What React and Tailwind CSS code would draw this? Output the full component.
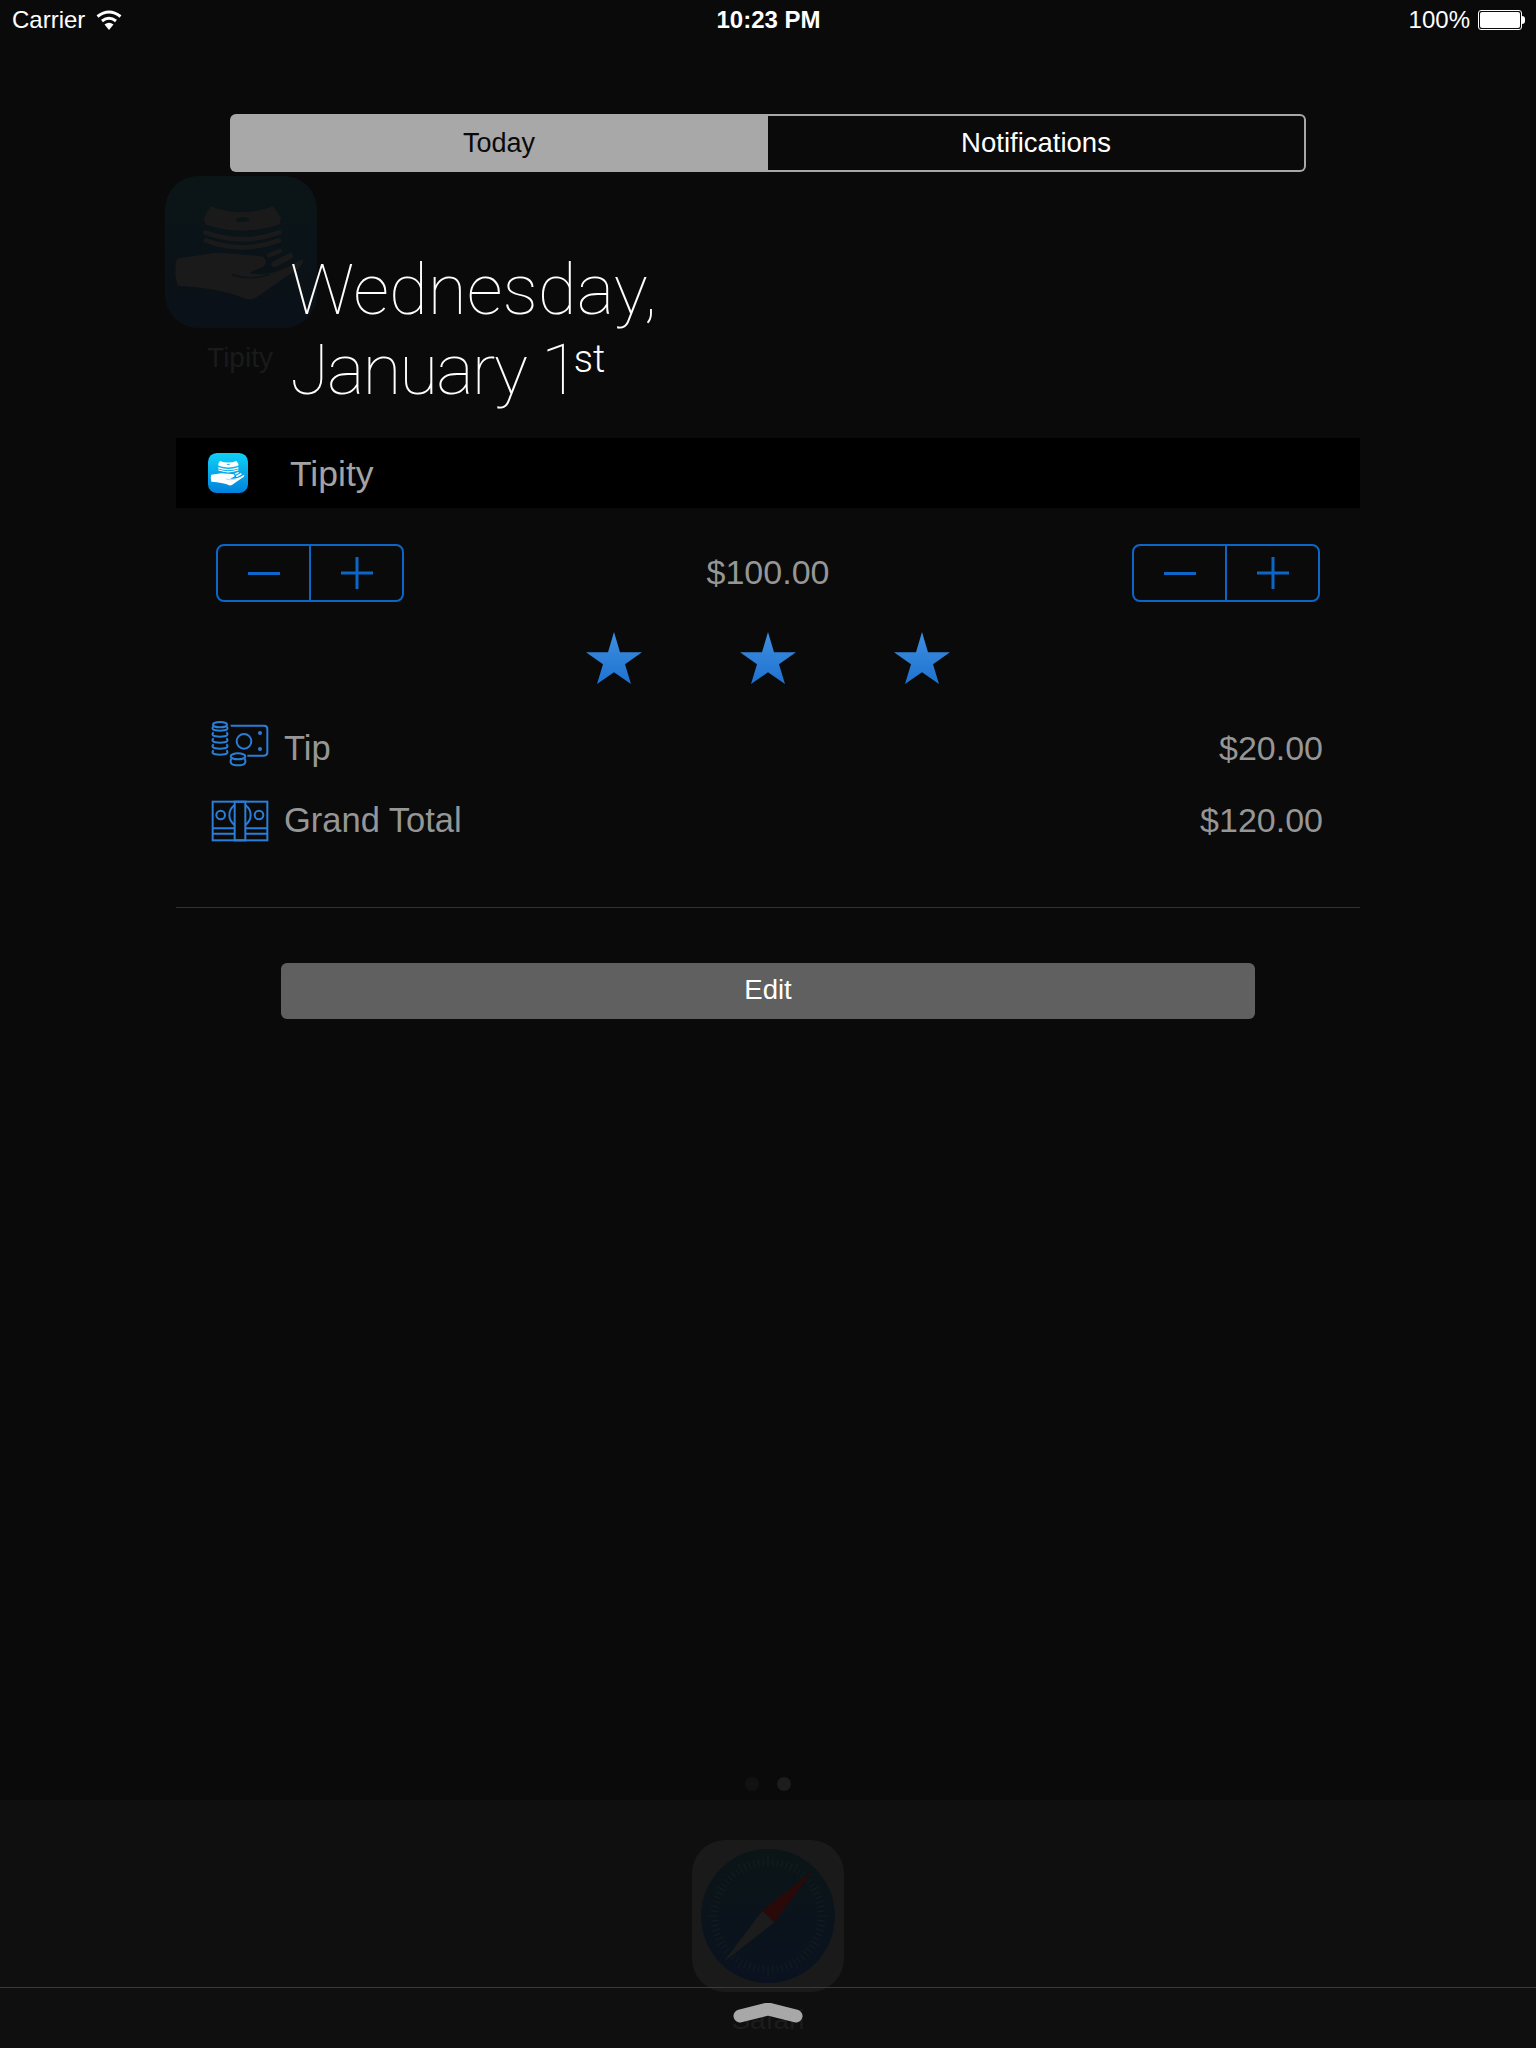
import React from 'react';

const helvetica = "font-['Liberation_Sans',Arial,sans-serif]";

// Tipity app mark, used for the faded home screen icon and the small widget icon
const TipityMark = ({ color, crease }) => (
  <g fill={color} stroke="none">
    <path d="M115 125 L135 90 Q230 125 322 90 L345 125 L340 145 Q230 180 120 145 Z" />
    <ellipse cx="230" cy="130" rx="20" ry="7" fill={crease} />
    <path d="M120 168 Q230 208 340 168" fill="none" stroke={color} strokeWidth="14" strokeLinecap="round" />
    <path d="M122 192 Q230 232 338 192" fill="none" stroke={color} strokeWidth="14" strokeLinecap="round" />
    <path d="M35 246 L150 228 Q230 232 292 240 Q306 250 296 268 L250 288 Q320 305 408 246 Q416 254 400 272 L270 362 Q250 372 225 360 Q170 335 38 326 Q25 290 35 246 Z" />
    <path d="M200 294 Q260 312 310 292" fill="none" stroke={crease} strokeWidth="5" />
    <path d="M310 236 L342 222" fill="none" stroke={color} strokeWidth="13" strokeLinecap="round" />
    <path d="M325 262 L372 238" fill="none" stroke={color} strokeWidth="18" strokeLinecap="round" />
  </g>
);

const Stepper = () => (
  <div className="flex h-[58px] w-[188px] rounded-lg border-2 border-[#0b66c8]">
    <div className="flex flex-1 items-center justify-center border-r-2 border-[#0b66c8]">
      <div className="h-[3px] w-[32px] bg-[#0b66c8]" />
    </div>
    <div className="flex flex-1 items-center justify-center">
      <svg width="32" height="32" viewBox="0 0 32 32">
        <path d="M0 16H32M16 0V32" stroke="#0b66c8" strokeWidth="3" />
      </svg>
    </div>
  </div>
);

const Star = ({ id }) => (
  <svg width="56" height="52" viewBox="0 0 56 52">
    <defs>
      <linearGradient id={id} x1="0" y1="0" x2="0" y2="1">
        <stop offset="0" stopColor="#3f8fe0" />
        <stop offset="1" stopColor="#1e72d0" />
      </linearGradient>
    </defs>
    <path d="M28 0 L34 20.3 L56 20.3 L39 32.3 L45 52 L28 40.3 L11 52 L17 32.3 L0 20.3 L22 20.3 Z" fill={`url(#${id})`} />
  </svg>
);

const WifiIcon = () => (
  <svg width="26" height="20" viewBox="0 0 26 20" fill="none" stroke="#ffffff" strokeWidth="3">
    <path d="M1.5 6.5Q13 -2.5 24.5 6.5" />
    <path d="M6 11Q13 5.5 20 11" />
    <path d="M13 20L8.5 14.5Q13 11 17.5 14.5Z" fill="#ffffff" stroke="none" />
  </svg>
);

const TipIcon = () => (
  <svg width="60" height="58" viewBox="60 60 180 174" fill="none" stroke="#2a7ed8" strokeWidth="6">
    <ellipse cx="90" cy="77" rx="21" ry="8" />
    {[0, 18, 36, 54, 72].map((offset) => (
      <path key={offset} transform={`translate(0 ${offset})`} d="M71 82C64 88 66 95 90 95C114 95 116 88 109 82" />
    ))}
    <path d="M122 80H222Q232 80 232 90V160Q232 170 222 170H172" />
    <circle cx="162" cy="127" r="22" />
    <circle cx="210" cy="102" r="6" fill="#2a7ed8" stroke="none" />
    <circle cx="210" cy="150" r="6" fill="#2a7ed8" stroke="none" />
    <ellipse cx="144" cy="172" rx="22" ry="9" />
    <path d="M124 178C118 192 124 199 144 199C164 199 170 192 164 178" />
  </svg>
);

const TotalIcon = () => (
  <svg width="60" height="43" viewBox="60 303 180 129" fill="none" stroke="#2a7ed8" strokeWidth="6">
    <rect x="68" y="308" width="164" height="116" />
    <rect x="134" y="308" width="32" height="116" />
    <circle cx="92" cy="348" r="13" />
    <circle cx="207" cy="348" r="13" />
    <path d="M134 318Q118 330 118 348Q118 366 134 378M166 318Q182 330 182 348Q182 366 166 378" />
    <path d="M68 388H134M166 388H232M68 404H134M166 404H232" />
  </svg>
);

const SafariIcon = () => (
  <svg width="152" height="152" viewBox="0 0 456 456">
    <defs>
      <linearGradient id="safariFace" x1="0" y1="0" x2="0" y2="1">
        <stop offset="0" stopColor="#0b1516" />
        <stop offset="1" stopColor="#0a1220" />
      </linearGradient>
    </defs>
    <rect width="456" height="456" rx="100" fill="#1a1a1a" />
    <circle cx="228" cy="228" r="201" fill="url(#safariFace)" />
    {Array.from({ length: 72 }).map((_, i) => (
      <line
        key={i}
        x1="228"
        y1={i % 6 === 0 ? 48 : 56}
        x2="228"
        y2="78"
        stroke="#182024"
        strokeWidth="2"
        transform={`rotate(${i * 5} 228 228)`}
      />
    ))}
    <path d="M362 92 L211 212 L247 247 Z" fill="#2a0909" />
    <path d="M94 367 L211 212 L247 247 Z" fill="#1c1c1c" />
  </svg>
);

const SummaryRow = ({ icon, label, value }) => (
  <div className="flex h-[56px] items-center pl-[36px] pr-[37px]">
    <div className="-ml-[2px] flex w-[74px] shrink-0 items-center">{icon}</div>
    <span className="translate-y-px text-[34.5px] text-[#969696]">{label}</span>
    <span className="ml-auto text-[34px] text-[#969696]">{value}</span>
  </div>
);

export default function App() {
  return (
    <div className={`relative h-[2048px] w-[1536px] overflow-hidden bg-[#0a0a0a] text-white ${helvetica}`}>
      {/* Home screen dimmed behind the notification centre */}
      <div className="absolute left-[165px] top-[176px] flex w-[152px] flex-col items-center">
        <svg width="152" height="152" viewBox="0 0 452 452">
          <defs>
            <linearGradient id="ghostTile" x1="0" y1="0" x2="0" y2="1">
              <stop offset="0" stopColor="#0b1516" />
              <stop offset="1" stopColor="#0a1119" />
            </linearGradient>
          </defs>
          <rect width="452" height="452" rx="100" fill="url(#ghostTile)" />
          <TipityMark color="#1a1a1a" crease="#0b1417" />
        </svg>
        <span className="mt-[14px] -translate-x-px text-[28px] leading-[32px] text-[#1a1a1a]">Tipity</span>
      </div>
      <div className="absolute left-[745px] top-[1777px] size-[14px] rounded-full bg-[#111111]" />
      <div className="absolute left-[777px] top-[1777px] size-[14px] rounded-full bg-[#1c1c1c]" />
      <div className="absolute inset-x-0 bottom-0 flex h-[248px] flex-col items-center bg-[#0f0f0f] pt-[40px]">
        <SafariIcon />
        <span className="mt-[12px] text-[28px] leading-[32px] text-[#1c1c1c]">Safari</span>
      </div>
      <div className="absolute inset-x-0 top-[1987px] h-px bg-[#3a3a3a]" />
      <svg className="absolute left-[732px] top-[2003px]" width="72" height="21" viewBox="0 0 72 21">
        <path d="M8 13 L36 6 L64 13" fill="none" stroke="#a8a8a8" strokeWidth="13" strokeLinecap="round" strokeLinejoin="round" />
      </svg>

      {/* Status bar */}
      <div className="relative flex h-[40px] items-center justify-between pl-[12px] pr-[11px] text-[24px]">
        <div className="flex w-[300px] items-center gap-[11px]">
          <span>Carrier</span>
          <WifiIcon />
        </div>
        <span className="font-bold">10:23 PM</span>
        <div className="flex w-[300px] items-center justify-end gap-[8px]">
          <span>100%</span>
          <div className="flex items-center">
            <div className="h-[20px] w-[44px] rounded-[3px] border border-white p-[1px]">
              <div className="size-full rounded-[2px] bg-white" />
            </div>
            <div className="h-[8px] w-[3px] rounded-r-sm bg-white" />
          </div>
        </div>
      </div>

      {/* Today / Notifications */}
      <div className="relative ml-[230px] mt-[74px] flex h-[58px] w-[1076px] text-[27.5px]">
        <div className="flex w-[538px] items-center justify-center rounded-l-md bg-[#a8a8a8] text-[27px] text-[#0a0a0a]">Today</div>
        <div className="flex flex-1 items-center justify-center rounded-r-md border-2 border-l-0 border-[#a8a8a8]">Notifications</div>
      </div>

      {/* Date */}
      <div className="relative ml-[290px] mt-[78px] font-['Roboto',sans-serif] text-[71px] font-thin leading-[80px]">
        <div>Wednesday,</div>
        <div className="flex items-start tracking-[-2px]">
          <span>January 1</span>
          <span className="-ml-[4px] mt-[5px] text-[38px] font-light leading-[48px] tracking-normal">st</span>
        </div>
      </div>

      {/* Tipity widget */}
      <div className="relative mx-[176px] mt-[28px]">
        <div className="flex h-[70px] items-center bg-black pl-[32px]">
          <svg className="shrink-0" width="40" height="40" viewBox="0 0 452 452">
            <defs>
              <linearGradient id="tipityTile" x1="0" y1="0" x2="0" y2="1">
                <stop offset="0" stopColor="#0ed2f7" />
                <stop offset="1" stopColor="#0080dc" />
              </linearGradient>
            </defs>
            <rect width="452" height="452" rx="100" fill="url(#tipityTile)" />
            <TipityMark color="#ffffff" crease="#35b4ec" />
          </svg>
          <span className="ml-[42px] translate-y-[2px] text-[35.5px] text-[#a3a3a3]">Tipity</span>
        </div>

        <div className="mt-[36px] flex items-center justify-between px-[40px]">
          <Stepper />
          <span className="-translate-y-px text-[34px] text-[#969696]">$100.00</span>
          <Stepper />
        </div>

        <div className="mt-[30px] flex justify-center gap-[98px]">
          <Star id="starOne" />
          <Star id="starTwo" />
          <Star id="starThree" />
        </div>

        <div className="mt-[36px] flex flex-col gap-[16px]">
          <SummaryRow icon={<TipIcon />} label="Tip" value="$20.00" />
          <SummaryRow icon={<div className="translate-y-px"><TotalIcon /></div>} label="Grand Total" value="$120.00" />
        </div>

        <div className="mt-[59px] h-px bg-[#333333]" />

        <div className="mx-[105px] mt-[55px] flex h-[56px] items-center justify-center rounded-md bg-[#606060] pb-[2px] text-[27.5px] text-white">
          Edit
        </div>
      </div>
    </div>
  );
}
